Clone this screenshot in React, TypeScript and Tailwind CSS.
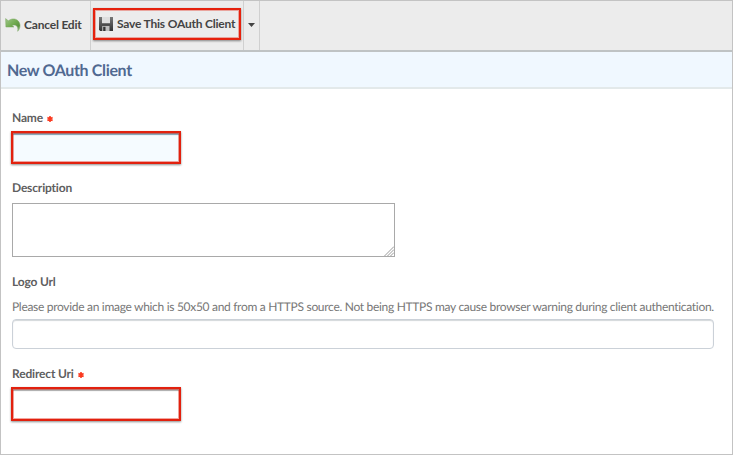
import React from "react";

function UndoIcon() {
  return (
    <svg className="block h-[15px] w-[16px] shrink-0" viewBox="0 0 16 15">
      <defs>
        <linearGradient id="undo" x1="0" y1="0" x2="1" y2="1">
          <stop offset="0" stopColor="#9fc68a" />
          <stop offset="0.45" stopColor="#74ad54" />
          <stop offset="0.75" stopColor="#5c9440" />
          <stop offset="1" stopColor="#c3d8b9" />
        </linearGradient>
      </defs>
      <path
        d="M0.600 1.600 3.300 3.800C6.500 1.300 10.600 1.300 13 3.800c2.600 2.800 2.900 7-.3 10.500.6-3-.1-5.100-1.800-5.900-1.200-.5-2.600-.4-3.800.1l1.800 1.500H0.900z"
        fill="url(#undo)"
        stroke="#78a65f"
        strokeWidth="0.5"
        strokeLinejoin="round"
      />
    </svg>
  );
}

function SaveIcon() {
  return (
    <svg className="block h-[14px] w-[14px] shrink-0" viewBox="0 0 14 14">
      <defs>
        <linearGradient id="disk" x1="0" y1="0" x2="0" y2="1">
          <stop offset="0" stopColor="#777" />
          <stop offset="1" stopColor="#333" />
        </linearGradient>
      </defs>
      <path d="M0 0h14v14H1.200L0 12.800z" fill="url(#disk)" />
      <path d="M3 0h8v6.500H3z" fill="#dedede" />
      <path d="M3 6.500h8v1H3z" fill="#444" />
      <path d="M3.200 9h7.300v5H3.200z" fill="#bdbdbd" />
      <path d="M4.200 9.800h2.300V14H4.200z" fill="#333" />
    </svg>
  );
}

function Label({ text, required }: { text: string; required?: boolean }) {
  return (
    <div className="flex h-4 items-center text-[12px] leading-4 font-bold tracking-[-0.17px] whitespace-nowrap text-[#5f5f5f]">
      <span>{text}</span>
      {required && (
        <svg className="mt-[2px] ml-[4.5px] h-[6px] w-[6px]" viewBox="0 0 6 6">
          <path d="M3 0v6M0.400 1.500l5.200 3M5.600 1.500l-5.200 3" stroke="#fa3a20" strokeWidth="1.600" />
        </svg>
      )}
    </div>
  );
}

export default function App() {
  return (
    <div className="flex h-[455px] w-[733px] flex-col border border-[#c3c3c3] bg-white font-['Lato','Open_Sans',sans-serif] [text-rendering:geometricPrecision]">
      <header className="flex h-[51px] shrink-0 border-b-2 border-[#bfc3c4] bg-[#ececec] text-[12px] leading-4 font-bold tracking-[-0.2px] whitespace-nowrap text-[#444]">
        <button className="flex w-[90px] items-center border-r border-[#d0d0d0] pb-[2px] pl-[4px]">
          <UndoIcon />
          <span className="ml-[3px]">Cancel Edit</span>
        </button>
        <div className="flex w-[153px] items-start border-r border-[#d0d0d0] pt-[7px] pl-[2px]">
          <button className="flex h-[32px] w-[148px] items-center border-2 border-[#e5210d] pl-[4px] shadow-[0_1px_2px_rgba(0,0,0,0.45),inset_0_0_0_1px_rgba(229,33,13,0.35)]">
            <SaveIcon />
            <span className="ml-[4px]">Save This OAuth Client</span>
          </button>
        </div>
        <button className="flex w-4 items-center justify-center border-r border-[#d0d0d0] pb-[2px]">
          <svg className="h-[4px] w-[7px]" viewBox="0 0 7 4">
            <path d="M0 0h7L3.500 4z" fill="#444" />
          </svg>
        </button>
      </header>
      <div className="flex h-[37px] shrink-0 items-center border-b-2 border-[#e3e9ea] bg-[#f0f8ff] pt-[2px] pl-[6px]">
        <h1 className="text-[16px] leading-5 font-bold tracking-[-0.35px] whitespace-nowrap text-[#506991]">New OAuth Client</h1>
      </div>
      <main className="flex flex-col items-start pt-[21px] pl-[11px]">
        <Label text="Name" required />
        <input
          aria-label="Name"
          className="mt-[5px] -ml-px h-[33px] w-[170px] border-2 border-[#e2210e] bg-[#f5fbff] shadow-[0_1px_2px_rgba(0,0,0,0.45),inset_0_0_0_1px_rgba(226,33,14,0.4),inset_0_2px_1px_#7fa0b2]"
        />
        <div className="mt-[16px]">
          <Label text="Description" />
        </div>
        <div className="relative mt-[7px] h-[54px] w-[383px]">
          <textarea
            aria-label="Description"
            className="block h-full w-full resize-none border border-[#a9a9a9] bg-white"
          />
          <svg className="absolute right-px bottom-px h-[10px] w-[10px]" viewBox="0 0 10 10">
            <path d="M0.500 10 10 0.500M3.500 10 10 3.500M6.500 10 10 6.500" stroke="#999" strokeWidth="1" />
          </svg>
        </div>
        <div className="mt-[17px]">
          <Label text="Logo Url" />
        </div>
        <p className="mt-[9px] text-[12px] leading-4 tracking-[-0.305px] whitespace-nowrap text-[#777]">
          Please provide an image which is 50x50 and from a HTTPS source. Not being HTTPS may cause browser warning during client authentication.
        </p>
        <input
          aria-label="Logo Url"
          className="mt-[4px] h-[30px] w-[702px] rounded-[4px] border border-[#cbd1d8] bg-white shadow-[inset_0_1px_1px_#d3d7da]"
        />
        <div className="mt-[17px]">
          <Label text="Redirect Uri" required />
        </div>
        <input
          aria-label="Redirect Uri"
          className="mt-[5px] -ml-px h-[34px] w-[170px] border-2 border-[#e2210e] bg-white shadow-[0_1px_2px_rgba(0,0,0,0.45),inset_0_0_0_1px_rgba(226,33,14,0.4),inset_0_2px_1px_#aaa]"
        />
      </main>
    </div>
  );
}
